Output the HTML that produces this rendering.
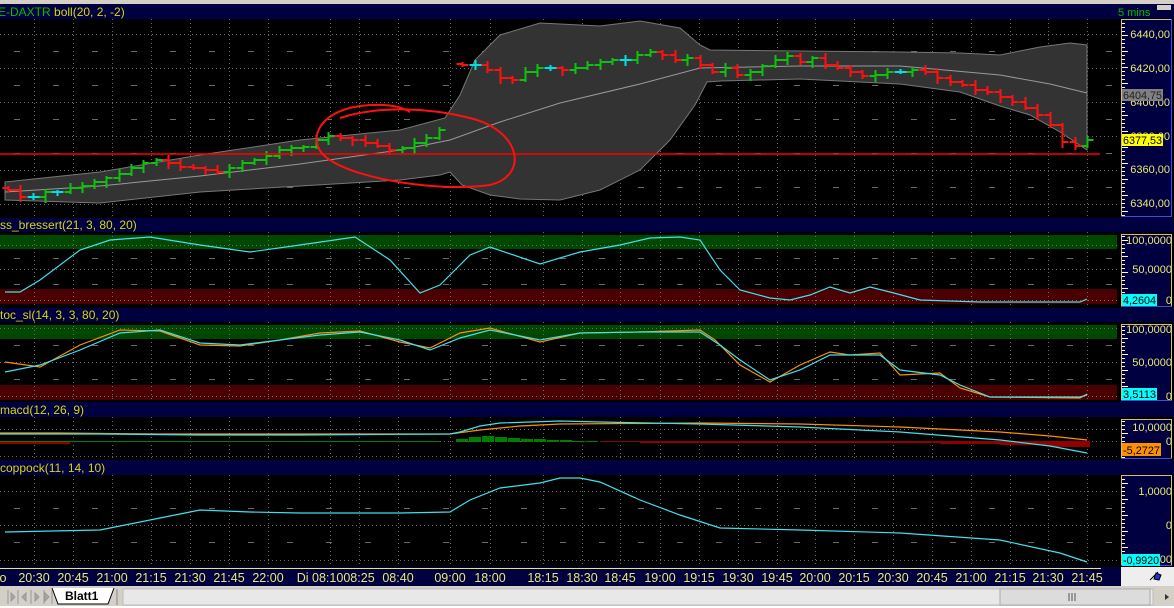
<!DOCTYPE html>
<html><head><meta charset="utf-8"><style>
html,body{margin:0;padding:0;background:#000;width:1174px;height:608px;overflow:hidden}
svg{display:block;font-family:"Liberation Sans",sans-serif}
</style></head><body>
<svg id="s" width="1174" height="608" xmlns="http://www.w3.org/2000/svg">
<rect width="1174" height="608" fill="#000"/>
<rect x="0" y="0" width="1174" height="4" fill="#d4d0c8"/>
<rect x="0" y="4" width="1174" height="15" fill="#000040"/>
<text x="-2" y="16" font-size="12" fill="#00c000">E-DAXTR <tspan fill="#d8d800">boll(20, 2, -2)</tspan></text>
<text x="1118" y="16" font-size="11" fill="#00c000">5 mins</text>
<rect x="1157" y="5" width="14" height="5" fill="#d4d0c8"/>
<rect x="0" y="218" width="1174" height="14" fill="#000040"/>
<text x="0" y="229" font-size="12" fill="#d8d800">ss_bressert(21, 3, 80, 20)</text>
<rect x="0" y="308" width="1174" height="14" fill="#000040"/>
<text x="0" y="319" font-size="12" fill="#d8d800">toc_sl(14, 3, 3, 80, 20)</text>
<rect x="0" y="402" width="1174" height="15" fill="#000040"/>
<text x="0" y="414" font-size="12" fill="#d8d800">macd(12, 26, 9)</text>
<rect x="0" y="460" width="1174" height="15" fill="#000040"/>
<text x="0" y="472" font-size="12" fill="#d8d800">coppock(11, 14, 10)</text>
<rect x="0" y="235" width="1117" height="14" fill="#004800"/>
<rect x="0" y="289" width="1117" height="15" fill="#4a0000"/>
<rect x="0" y="325" width="1117" height="14" fill="#004800"/>
<rect x="0" y="385" width="1117" height="15" fill="#4a0000"/>
<g id="grid" stroke="#6a6a6a" stroke-width="1" stroke-dasharray="1,3"></g>
<path d="M5,182 L100,172 L200,155 L300,140 L400,130 L445,118 L460,95 L475,60 L500,35 L540,23 L600,26 L640,21 L680,28 L700,45 L710,50 L800,51 L900,52 L960,53 L1000,55 L1040,47 L1070,43 L1087,45 L1087,150 L1060,132 L1030,115 L1000,106 L960,92 L900,84 L800,79 L720,81 L707,82 L695,105 L670,140 L640,170 L600,190 L560,200 L520,199 L490,195 L462,185 L450,172 L440,175 L400,180 L300,186 L200,192 L100,203 L5,200 Z" fill="#333333" stroke="#777" stroke-width="1"/>
<polyline fill="none" stroke="#999" stroke-width="1" points="5,192 100,186 200,176 300,164 400,150 450,140 500,122 560,103 640,84 700,68 800,66 900,66 1000,75 1050,84 1087,93"/>
<g id="bars" stroke-width="2"></g>
<line x1="0" y1="154" x2="1100" y2="154" stroke="#ff0000" stroke-width="1.5"/>
<path d="M340,118 C380,105 430,108 470,118 C520,130 530,175 490,185 C440,192 360,180 330,160 C305,145 315,112 360,106 C385,103 400,106 410,112" fill="none" stroke="#ff1010" stroke-width="2"/>
<polyline fill="none" stroke="#40e0f0" stroke-width="1.2" points="5,292 20,292 40,280 80,250 110,240 150,237 200,245 250,252 300,245 355,237 390,260 420,293 440,285 470,255 490,247 540,264 580,252 620,245 650,238 680,237 700,240 720,270 740,290 770,298 790,300 810,295 830,287 850,293 870,287 890,292 920,300 980,302 1080,302 1087,299"/>
<polyline fill="none" stroke="#ff9000" stroke-width="1.2" points="5,362 40,367 80,345 120,330 160,331 200,345 240,346 280,340 320,333 360,331 400,342 430,348 460,333 490,328 540,342 580,333 640,332 700,330 715,340 740,365 770,382 800,365 830,352 850,355 880,353 900,375 940,373 960,388 990,397 1080,398 1087,394"/>
<polyline fill="none" stroke="#40e0f0" stroke-width="1.2" points="5,372 40,365 80,350 120,333 160,330 200,343 240,345 280,340 320,335 360,332 400,340 430,350 460,338 490,330 540,340 580,333 640,332 700,332 720,345 740,360 770,380 800,370 830,355 850,355 880,355 900,370 940,375 960,385 990,397 1080,397 1087,395"/>
<g fill="#008000"><rect x="456" y="439" width="12" height="3"/><rect x="469" y="437" width="12" height="5"/><rect x="482" y="436" width="12" height="6"/><rect x="495" y="437" width="12" height="5"/><rect x="508" y="438" width="12" height="4"/><rect x="521" y="439" width="12" height="3"/><rect x="534" y="439" width="12" height="3"/><rect x="547" y="440" width="12" height="2"/><rect x="560" y="440" width="12" height="2"/><rect x="573" y="441" width="12" height="1"/><rect x="586" y="441" width="12" height="1"/><rect x="0" y="441" width="440" height="1"/></g>
<g fill="#900000"><rect x="600" y="441" width="440" height="1"/><rect x="640" y="441" width="300" height="2"/><rect x="940" y="441" width="60" height="3"/><rect x="1000" y="441" width="50" height="4"/><rect x="1050" y="441" width="40" height="6"/><rect x="0" y="442" width="70" height="2"/></g>
<polyline fill="none" stroke="#ff9000" stroke-width="1.2" points="0,433 60,433 160,434 300,434 450,434 480,430 520,426 560,424 700,423 800,424 900,427 1000,432 1050,436 1087,440"/>
<polyline fill="none" stroke="#40e0f0" stroke-width="1.2" points="0,434 100,434 200,435 300,435 450,434 460,432 480,426 500,423 560,421 600,422 700,424 800,427 900,432 1000,440 1050,446 1087,453"/>
<polyline fill="none" stroke="#40e0f0" stroke-width="1.2" points="5,532 100,530 150,520 200,510 250,512 300,513 400,513 450,512 470,500 500,488 540,483 560,478 580,478 600,482 640,500 680,515 720,528 800,530 900,533 1000,540 1060,553 1087,562"/>
<g fill="#000040" stroke="#d8c060" stroke-width="1">
<rect x="1121.5" y="19.5" width="50" height="197"/>
<rect x="1121.5" y="234.5" width="50" height="72"/>
<rect x="1121.5" y="324.5" width="50" height="76"/>
<rect x="1121.5" y="419.5" width="50" height="39"/>
<rect x="1121.5" y="475.5" width="50" height="90"/>
</g>
<g stroke="#3050ff" stroke-width="1"><line x1="1121" y1="216.5" x2="1172" y2="216.5"/><line x1="1171.5" y1="19" x2="1171.5" y2="217"/><line x1="1121" y1="306.5" x2="1172" y2="306.5"/><line x1="1121" y1="400.5" x2="1172" y2="400.5"/><line x1="1121" y1="458.5" x2="1172" y2="458.5"/><line x1="1121" y1="565.5" x2="1172" y2="565.5"/></g>
<g id="ticks" stroke="#fff" stroke-width="1"></g>
<g font-size="11" fill="#e8e870" text-anchor="end">
<text x="1170" y="38">6440,00</text><text x="1170" y="72">6420,00</text><text x="1170" y="106">6400,00</text><text x="1170" y="140">6380,00</text><text x="1170" y="173">6360,00</text><text x="1170" y="207">6340,00</text>
<text x="1172" y="244">100,0000</text><text x="1172" y="273">50,0000</text><text x="1172" y="304">0</text>
<text x="1172" y="333">100,0000</text><text x="1172" y="366">50,0000</text><text x="1172" y="400">0</text>
<text x="1172" y="431">10,0000</text><text x="1172" y="445">0</text>
<text x="1172" y="495">1,0000</text><text x="1172" y="529">0</text><text x="1172" y="563">000</text>
</g>
<g font-size="11">
<rect x="1122" y="89" width="41" height="12" fill="#808080"/><text x="1123" y="99" textLength="39" lengthAdjust="spacingAndGlyphs" fill="#202020">6404,75</text>
<rect x="1122" y="134" width="41" height="12" fill="#ffff00"/><text x="1123" y="144" textLength="39" lengthAdjust="spacingAndGlyphs" fill="#000">6377,53</text>
<rect x="1122" y="294" width="35" height="12" fill="#00ffff"/><text x="1123" y="304" textLength="33" lengthAdjust="spacingAndGlyphs" fill="#000">4,2604</text>
<rect x="1122" y="388" width="35" height="12" fill="#00ffff"/><text x="1123" y="398" textLength="33" lengthAdjust="spacingAndGlyphs" fill="#000">3,5113</text>
<rect x="1122" y="443" width="39" height="13" fill="#ff9000"/><text x="1123" y="454" textLength="37" lengthAdjust="spacingAndGlyphs" fill="#000">-5,2727</text>
<rect x="1122" y="554" width="38" height="12" fill="#00ffff"/><text x="1123" y="564" textLength="36" lengthAdjust="spacingAndGlyphs" fill="#000">-0,9920</text>
</g>
<rect x="0" y="567" width="1121" height="19" fill="#000040"/>
<line x1="0" y1="568.5" x2="1101" y2="568.5" stroke="#e8e870" stroke-width="1"/>
<rect x="1121" y="567" width="53" height="20" fill="#eeeeee"/>
<path d="M1150,580 L1158,572 M1156,573 l5,2 l-2,5 l-5,-1z" stroke="#000" fill="#2030d0" stroke-width="1"/>
<g id="times" font-size="12.5" fill="#e8e870" text-anchor="middle"></g>
<rect x="0" y="586" width="1174" height="22" fill="#d4d0c8"/>
<rect x="0" y="606" width="1174" height="2" fill="#ffffff"/>
<g stroke="#999" fill="#a8a8a8"><path d="M8,590v14M18,590v14M31,590v14M44,590v14M52,590v14" fill="none"/><path d="M15,597l-4,-4v8z M22,597l4,-4v8z M35,593l4,4l-4,4z M45,593l4,4l-4,4z"/></g>
<path d="M52,588 L58,604 L108,604 L114,588" fill="#fff" stroke="#000" stroke-width="1"/>
<text x="65" y="600" font-size="12" font-weight="bold" fill="#000">Blatt1</text>
<line x1="117" y1="589" x2="117" y2="605" stroke="#888"/>
<path d="M127,597 l3,-3 v6z" fill="#333"/>
<rect x="123" y="589" width="1030" height="16" fill="#e8e8e8" stroke="#bbb"/>
<rect x="1000" y="589" width="150" height="16" fill="#dcdcdc" stroke="#aaa"/>
<path d="M1069,593v8M1072,593v8M1075,593v8" stroke="#555"/>
<path d="M1165,594 l4,3 l-4,3z" fill="#333"/>
</svg>
<script>
var NS="http://www.w3.org/2000/svg",s=document.getElementById('s');
function el(p,t,a){var e=document.createElementNS(NS,t);for(var k in a)e.setAttribute(k,a[k]);p.appendChild(e);return e;}
var xs=[34,73,112,151,190,229,268,320,359,398,450,490,543,582,620,660,699,738,777,815,854,893,932,971,1010,1048,1087];
var lab=["20:30","20:45","21:00","21:15","21:30","21:45","22:00","Di 08:10","08:25","08:40","09:00","18:00","18:15","18:30","18:45","19:00","19:15","19:30","19:45","20:00","20:15","20:30","20:45","21:00","21:15","21:30","21:45"];
var g=document.getElementById('grid'),T=document.getElementById('times');
var panels=[[19,217],[232,307],[322,401],[417,459],[475,566]];
xs.forEach(function(x,i){var xx=(i==7?330:x);panels.forEach(function(p){el(g,'line',{x1:xx+.5,y1:p[0],x2:xx+.5,y2:p[1]});});
 var t=el(T,'text',{x:x,y:582});t.textContent=lab[i];});
var t0=el(T,'text',{x:3,y:582});t0.textContent="o";
var hy=[34,68,102,136,170,204,245,269,300,328,362,396,429,441,456,491,525,560];
hy.forEach(function(y){el(g,'line',{x1:0,y1:y+.5,x2:1117,y2:y+.5});});
var mh=[51,85,119,153,187,258,284,345,379,508,542];
mh.forEach(function(y){el(g,'line',{x1:0,y1:y+.5,x2:1117,y2:y+.5,'stroke-dasharray':'6,33','stroke-dashoffset':'-14'});});
var tk=document.getElementById('ticks');
panels.forEach(function(p){for(var y=p[0]+4;y<p[1];y+=4)el(tk,'line',{x1:1122,y1:y+.5,x2:(y%16<4?1128:1125),y2:y+.5});});
var b=document.getElementById('bars');
function seg(x0,step,c,o0){var o=o0;c.forEach(function(cl,i){var x=Math.round(x0+step*i)+.5,col=cl<o?'#10c010':(cl>o?'#ff1010':'#00e0e0');
 var hi=Math.min(o,cl)-2-((i*7)%4),lo=Math.max(o,cl)+2+((i*3)%5);
 el(b,'line',{x1:x,y1:hi,x2:x,y2:lo,stroke:col});el(b,'line',{x1:x-6,y1:o,x2:x,y2:o,stroke:col});el(b,'line',{x1:x,y1:cl,x2:x+6,y2:cl,stroke:col});o=cl;});}
seg(8,12.3,[190,197,197,192,192,188,186,182,178,174,168,163,160,163,167,168,170,172,168,163,160,156,150,148,147,140,136,138,140,143,146,150,148,143,138,130],188);
seg(462,12.5,[65,65,70,78,80,72,68,68,70,68,65,62,60,60,55,52,55,60,58,65,72,68,75,72,66,60,56,62,58,65,68,72,76,75,72,72,70,72,78,82,85,90,92,97,102,108,115,125,142,146,140],64);
</script>
</body></html>
